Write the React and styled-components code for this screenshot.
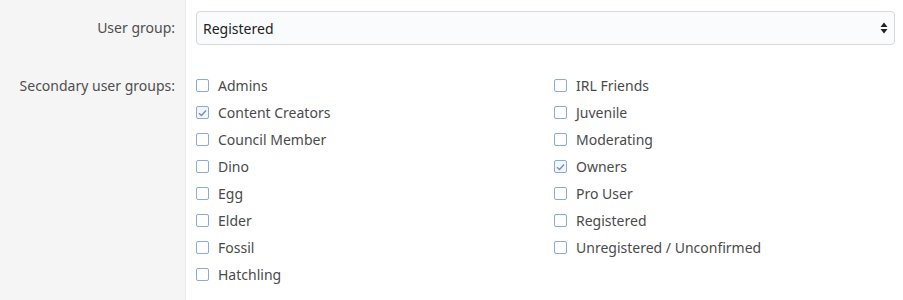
import React from 'react';
import styled, { createGlobalStyle } from 'styled-components';

const GlobalStyle = createGlobalStyle`
    html, body {
        margin: 0;
        padding: 0;
        background: #fff;
    }
    body {
        font-family: "Segoe UI", "Noto Sans", "Open Sans", sans-serif;
        font-size: 14px;
        color: #505050;
    }
`;

const Form = styled.div`
    width: 903px;
    height: 300px;
    overflow: hidden;
`;

const Row = styled.div`
    display: flex;
    align-items: stretch;
`;

const Label = styled.div`
    flex: 0 0 186px;
    box-sizing: border-box;
    background: #f5f5f5;
    border-right: 1px solid #ececec;
    padding: ${props => props.$pad};
    padding-right: 10px;
    text-align: right;
    line-height: 20px;
    color: #4e4e4e;
`;

const Field = styled.div`
    flex: 1;
    padding: ${props => props.$pad};
`;

const SelectBox = styled.div`
    display: flex;
    align-items: center;
    justify-content: space-between;
    height: 34px;
    box-sizing: border-box;
    border: 1px solid #d8d8d8;
    border-radius: 4px;
    background: #f9fbfd;
    padding: 0 6px 0 6px;
    color: #222;
`;

const Arrows = styled.svg`
    width: 8px;
    height: 12px;
`;

const Options = styled.div`
    display: grid;
    grid-template-columns: 358px 1fr;
    grid-template-rows: repeat(8, 27px);
    grid-auto-flow: column;
`;

const Option = styled.label`
    display: flex;
    align-items: center;
    gap: 9px;
    color: #4a4a4a;
`;

const Box = styled.span`
    flex: 0 0 13px;
    width: 13px;
    height: 13px;
    box-sizing: border-box;
    border: 1.5px solid #8caad2;
    border-radius: 2px;
    background: ${props => (props.$checked ? '#f2f6fb' : '#fff')};
    display: flex;
    align-items: center;
    justify-content: center;
`;

const left = [
    ['Admins', false],
    ['Content Creators', true],
    ['Council Member', false],
    ['Dino', false],
    ['Egg', false],
    ['Elder', false],
    ['Fossil', false],
    ['Hatchling', false],
];

const right = [
    ['IRL Friends', false],
    ['Juvenile', false],
    ['Moderating', false],
    ['Owners', true],
    ['Pro User', false],
    ['Registered', false],
    ['Unregistered / Unconfirmed', false],
];

const Check = () => (
    <svg width="9" height="8" viewBox="0 0 9 8">
        <path d="M1 4.2 L3.5 6.5 L8 1.5" fill="none" stroke="#7390b6" strokeWidth="1.4" />
    </svg>
);

const GroupOption = ({ name, checked }) => (
    <Option>
        <Box $checked={checked}>{checked && <Check />}</Box>
        {name}
    </Option>
);

const App = () => {
    return (
        <Form>
            <GlobalStyle />
            <Row>
                <Label $pad="18px 0 14px">User group:</Label>
                <Field $pad="11px 8px 10px 10px">
                    <SelectBox>
                        <span>Registered</span>
                        <Arrows viewBox="0 0 8 12">
                            <path d="M4 0.5 L7.5 5 H0.5 Z M4 11.5 L7.5 7 H0.5 Z" fill="#222" />
                        </Arrows>
                    </SelectBox>
                </Field>
            </Row>
            <Row>
                <Label $pad="21px 0 0">Secondary user groups:</Label>
                <Field $pad="17px 8px 13px 10px">
                    <Options>
                        {left.concat(right).map(([name, checked]) => (
                            <GroupOption key={name} name={name} checked={checked} />
                        ))}
                    </Options>
                </Field>
            </Row>
        </Form>
    );
};

export default App;
